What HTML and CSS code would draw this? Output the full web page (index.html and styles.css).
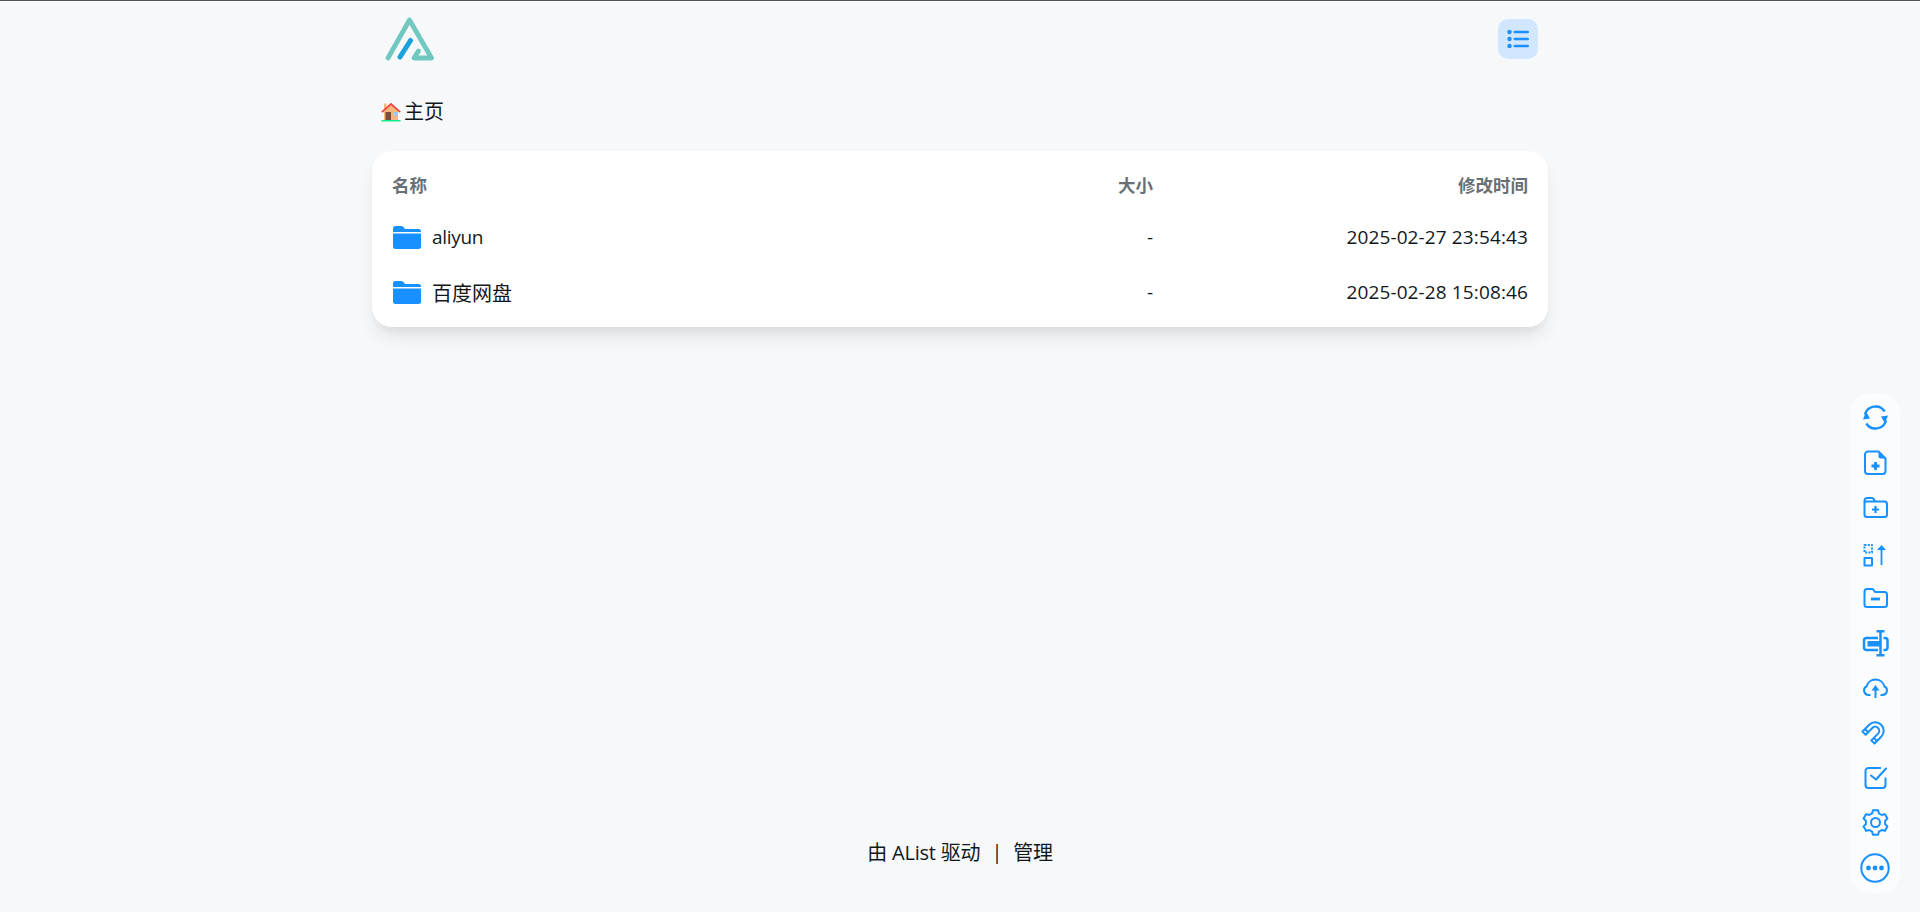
FILE: index.html
```html
<!DOCTYPE html>
<html lang="zh-CN">
<head>
<meta charset="utf-8">
<title>主页 | AList</title>
<link rel="stylesheet" href="styles.css">
</head>
<body>
<div class="page">
  <main class="column">
    <header class="topbar">
      <a class="logo" href="#" aria-label="AList">
        <svg width="50" height="46" viewBox="0 0 50 46" fill="none" stroke-linecap="round" stroke-linejoin="round">
          <path d="M3 42L24.500 4L46.500 42H29L33.500 35" stroke="#70c8c1" stroke-width="4.800"/>
          <path d="M15 41L25.500 24.500" stroke="#1ba2dc" stroke-width="5"/>
        </svg>
      </a>
      <button class="layout-btn" aria-label="列表">
        <svg width="22" height="18" viewBox="0 0 22 18" fill="#1890ff">
          <circle cx="2.500" cy="2" r="2.200"/><circle cx="2.500" cy="9" r="2.200"/><circle cx="2.500" cy="16" r="2.200"/>
          <rect x="6.500" y="0.700" width="15.500" height="2.600" rx="1.300"/><rect x="6.500" y="7.700" width="15.500" height="2.600" rx="1.300"/><rect x="6.500" y="14.700" width="15.500" height="2.600" rx="1.300"/>
        </svg>
      </button>
    </header>

    <nav class="crumb">
      <svg class="house" width="20" height="20" viewBox="0 0 20 20">
        <rect x="3" y="1.500" width="2.500" height="6" fill="#f5b97f"/>
        <path d="M3 9L10 3L17 9V18H3Z" fill="#f4ba7c"/>
        <path d="M.8 10.200L10 2L19.200 10.200" fill="none" stroke="#f5403f" stroke-width="1.700"/>
        <rect x="4.500" y="10" width="5.500" height="8" fill="#7c4d3c"/>
        <rect x="12" y="10" width="4" height="3.500" fill="#8dd0fb"/>
        <rect x="0.500" y="18" width="19" height="1.500" fill="#0cf08c"/>
      </svg>
      <span>主页</span>
    </nav>

    <section class="card">
      <div class="row head">
        <div>名称</div><div class="end">大小</div><div class="end">修改时间</div>
      </div>
      <div class="row">
        <div class="name">
          <svg class="folder" width="28" height="23" viewBox="0 0 28 23" fill="#1890ff"><path d="M0 6V2.500A2.500 2.500 0 0 1 2.500 0H8Q10 0 11 1.500L12 3H25.500A2.500 2.500 0 0 1 28 5.500V6Z"/><path d="M0 7.500H28V20.500A2.500 2.500 0 0 1 25.500 23H2.500A2.500 2.500 0 0 1 0 20.500Z"/></svg>
          <span class="latin">aliyun</span>
        </div>
        <div class="end">-</div><div class="end stamp">2025-02-27 23:54:43</div>
      </div>
      <div class="row">
        <div class="name">
          <svg class="folder" width="28" height="23" viewBox="0 0 28 23" fill="#1890ff"><path d="M0 6V2.500A2.500 2.500 0 0 1 2.500 0H8Q10 0 11 1.500L12 3H25.500A2.500 2.500 0 0 1 28 5.500V6Z"/><path d="M0 7.500H28V20.500A2.500 2.500 0 0 1 25.500 23H2.500A2.500 2.500 0 0 1 0 20.500Z"/></svg>
          <span>百度网盘</span>
        </div>
        <div class="end">-</div><div class="end stamp">2025-02-28 15:08:46</div>
      </div>
    </section>
  </main>

  <footer class="foot">
    <span>由 AList 驱动</span><span>|</span><span>管理</span>
  </footer>
</div>

<aside class="tools">
  <div class="tool"><svg class="ico ring" viewBox="0 0 25 25"><path d="M1.920 9.500A11 11 0 0 1 21.720 6.500"/><path d="M23.080 15.500A11 11 0 0 1 3.280 18.500"/><path class="fill" d="M3 6.500L0 14.500L7 13.500Z"/><path class="fill" d="M22 18.500L25 10.500L18 11.500Z"/></svg></div>
  <div class="tool"><svg class="ico" viewBox="0 0 25 25"><path d="M5 1.500H15.500L22.500 8.500V21A3 3 0 0 1 19.500 24H5A3 3 0 0 1 2 21V4.500A3 3 0 0 1 5 1.500Z"/><path class="fill" d="M15.500 1.500L22.500 8.500H17.500A2 2 0 0 1 15.500 6.500Z"/><path class="thick" d="M12.500 12V20M8.500 16H16.500"/></svg></div>
  <div class="tool"><svg class="ico" viewBox="0 0 25 25"><path d="M1.500 8V5.500A2.500 2.500 0 0 1 4 3H9Q10.500 3 11 4.500L12 6.500H21.500A2.500 2.500 0 0 1 24 9V19.500A2.500 2.500 0 0 1 21.500 22H4A2.500 2.500 0 0 1 1.500 19.500Z"/><path d="M1.500 6.500H12"/><path class="mid" d="M12.500 11V18M9 14.500H16"/></svg></div>
  <div class="tool"><svg class="ico" viewBox="0 0 25 25"><rect x="1.500" y="5" width="7.500" height="7.500" stroke-dasharray="2 1.300"/><rect x="1.500" y="18" width="7.500" height="7.500"/><path d="M18.500 9V25" stroke-width="1.800"/><path class="fill" d="M18.500 5L23 10H14Z"/></svg></div>
  <div class="tool"><svg class="ico" viewBox="0 0 25 25"><path d="M1.500 6.500A2.500 2.500 0 0 1 4 4H9Q10.500 4 11 5.500L12 7H21.500A2.500 2.500 0 0 1 24 9.500V19.500A2.500 2.500 0 0 1 21.500 22H4A2.500 2.500 0 0 1 1.500 19.500Z"/><path class="thick" d="M8 14H17"/></svg></div>
  <div class="tool"><svg class="ico rename" viewBox="0 0 25 25"><path d="M15 8H3.500A2.500 2.500 0 0 0 1 10.500V17.500A2.500 2.500 0 0 0 3.500 20H15"/><path d="M20.500 8H22A2.500 2.500 0 0 1 24.500 10.500V17.500A2.500 2.500 0 0 1 22 20H20.500"/><path d="M17.500 1.200V25.300M13.500 1.200H21.500M13.500 25.300H21.500"/><rect class="fill" x="4.500" y="11" width="13" height="5.500"/></svg></div>
  <div class="tool"><svg class="ico" viewBox="0 0 25 25"><path d="M7.500 20H5.500A4.500 4.500 0 0 1 3.500 11.500A9.300 9.300 0 0 1 21.500 11.500A4.500 4.500 0 0 1 19.500 20H17.500"/><path d="M12.500 23V13"/><path class="fill" d="M12.500 10L16.500 15.500H8.500Z"/></svg></div>
  <div class="tool"><svg class="ico" viewBox="0 0 25 25"><g transform="translate(-1 -1) rotate(45 12.500 12.500)"><path d="M4 21V11.500A8.500 8.500 0 0 1 21 11.500V21H16.500V11.500A4 4 0 0 0 8.500 11.500V21Z"/><path d="M4 17.500H8.500M16.500 17.500H21"/></g></svg></div>
  <div class="tool"><svg class="ico" viewBox="0 0 25 25"><path d="M22.500 12.500V20A3 3 0 0 1 19.500 23H5.500A3 3 0 0 1 2.500 20V6A3 3 0 0 1 5.500 3H18"/><path d="M8 10.500L13 14.500L23 3.500" stroke-linecap="round"/></svg></div>
  <div class="tool"><svg class="ico" viewBox="0 0 25 25"><path d="M9.900.3H15.100L15.850 3.300L18.800 5L21.800 4.100L24.400 8.600L22.150 10.800V14.200L24.400 16.400L21.800 20.900L18.800 20L15.850 21.700L15.100 24.700H9.900L9.150 21.700L6.200 20L3.200 20.900L.6 16.400L2.850 14.200V10.800L.6 8.600L3.200 4.100L6.200 5L9.150 3.300Z"/><circle cx="12.500" cy="12.500" r="4.500"/></svg></div>
  <div class="tool"><svg class="ico big" viewBox="0 0 30 30"><circle cx="15" cy="15" r="13.700"/><g class="fill"><circle cx="8.500" cy="15" r="2.400"/><circle cx="15" cy="15" r="2.400"/><circle cx="21.500" cy="15" r="2.400"/></g></svg></div>
</aside>
</body>
</html>
```

FILE: styles.css
```css
* { box-sizing: border-box; }
html, body { margin: 0; padding: 0; }
body {
  background: #f7f8fa;
  color: #11181c;
  font-family: "Open Sans", "Noto Sans CJK SC", sans-serif;
  font-size: 19px;
  border-top: 1px solid #555;
}
.page {
  min-height: 911px;
  display: flex;
  flex-direction: column;
}
.column { width: 1176px; margin: 0 auto; }
.topbar {
  height: 79px;
  display: flex;
  align-items: center;
  justify-content: space-between;
  padding: 0 10px 0 13px;
}
.logo { display: block; height: 46px; margin-top: -4px; }
.layout-btn {
  width: 40px;
  height: 40px;
  margin-top: -4px;
  border: 0;
  border-radius: 10px;
  background: #d1e6ff;
  display: flex;
  align-items: center;
  justify-content: center;
  padding: 0;
}
.crumb {
  height: 50px;
  padding: 0 0 0 9px;
  display: flex;
  align-items: center;
  gap: 3px;
  font-size: 20px;
  line-height: 1;
  margin-top: 7px;
  margin-bottom: 14px;
}
.card {
  background: #fff;
  border-radius: 20px;
  padding: 8px 20px;
  box-shadow: 0 12px 19px -4px rgba(0,0,0,.1), 0 5px 8px -3px rgba(0,0,0,.05);
}
.row {
  height: 55px;
  display: grid;
  grid-template-columns: 5fr 1.7fr 3.3fr;
  align-items: center;
  padding-top: 1px;
}
.head {
  height: 50px;
  padding-top: 0;
  font-weight: 700;
  font-size: 17.500px;
  color: #687076;
}
.end { text-align: right; }
.stamp { letter-spacing: .12px; }
.name { display: flex; align-items: center; gap: 11px; font-size: 20px; }
.latin { font-size: 19px; letter-spacing: -.3px; }
.folder { flex: none; margin-left: 1px; }
.foot {
  margin-top: auto;
  height: 72px;
  margin-bottom: 25px;
  display: flex;
  align-items: center;
  justify-content: center;
  gap: 11px;
  font-size: 20px;
  letter-spacing: -.2px;
}
.tools {
  position: fixed;
  top: 393px;
  right: 20px;
  width: 50px;
  height: 500px;
  padding: 2px 0 3px;
  background: #fbfcfe;
  border-radius: 20px;
  display: flex;
  flex-direction: column;
}
.tool {
  height: 45px;
  display: flex;
  align-items: center;
  justify-content: center;
}
.ico {
  width: 25px;
  height: 25px;
  overflow: visible;
  fill: none;
  stroke: #1890ff;
  stroke-width: 2;
  stroke-linejoin: round;
}
.ico .fill { fill: #1890ff; stroke: none; }
.ico .thick { stroke-width: 2.800; }
.ico .mid { stroke-width: 2.200; }
.ico.rename { stroke-width: 2.500; }
.ico.ring { stroke-width: 2.400; }
.ico.big { width: 30px; height: 30px; }
```
